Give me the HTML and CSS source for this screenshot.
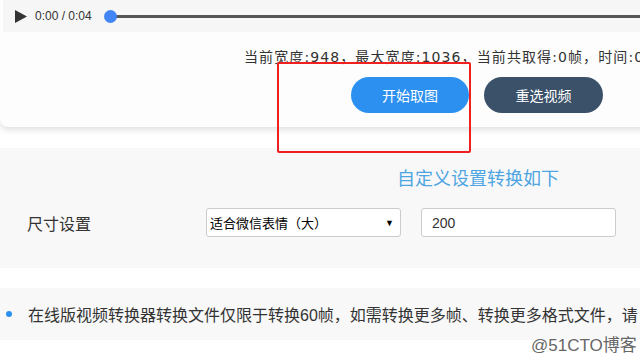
FILE: index.html
```html
<!DOCTYPE html>
<html lang="zh-CN">
<head>
    <meta charset="UTF-8">
    <meta name="viewport" content="width=device-width, initial-scale=1.0">
    <title>视频转GIF</title>
    <link rel="stylesheet" href="styles.css">
</head>
<body>
    <div class="page">
        <!-- Player card -->
        <div class="card">
            <div class="player">
                <svg class="play" width="12" height="13" viewBox="0 0 12 13"><path d="M0 0 L12 6.5 L0 13 Z" fill="#333"/></svg>
                <span class="time">0:00 / 0:04</span>
                <div class="track"><span class="knob"></span></div>
            </div>
            <div class="status">当前宽度:948，最大宽度:1036，当前共取得:0帧，时间:0</div>
            <div class="actions">
                <button class="btn btn-primary">开始取图</button>
                <button class="btn btn-dark">重选视频</button>
            </div>
        </div>

        <!-- Settings -->
        <div class="settings">
            <h2 class="settings-title">自定义设置转换如下</h2>
            <div class="setting-row">
                <label class="setting-label">尺寸设置</label>
                <div class="select">适合微信表情（大）<span class="caret">▼</span></div>
                <div class="text-input">200</div>
            </div>
        </div>

        <!-- Notice -->
        <div class="notice">
            <span class="dot"></span>
            <p>在线版视频转换器转换文件仅限于转换60帧，如需转换更多帧、转换更多格式文件，请</p>
        </div>
    </div>

    <!-- annotation box -->
    <div class="mark"></div>
    <div class="watermark">@51CTO博客</div>
</body>
</html>
```

FILE: styles.css
```css
/* General styles */
body {
    margin: 0;
    width: 640px;
    height: 359px;
    overflow: hidden;
    background: #ffffff;
    font-family: "Liberation Sans", "Noto Sans CJK SC", sans-serif;
    color: #333;
    position: relative;
}

.page {
    width: 640px;
}

/* Player card */
.card {
    width: 700px;
    height: 127px;
    background: #fdfdfd;
    border-radius: 0 0 8px 8px;
    box-shadow: 0 3px 6px rgba(0, 0, 0, 0.12);
}

.player {
    height: 32px;
    margin-left: 3px;
    background: #f6f6f6;
    display: flex;
    align-items: center;
}

.play {
    margin-left: 12px;
}

.time {
    margin-left: 8px;
    font-size: 12px;
    color: #333;
}

.track {
    flex: 1;
    height: 3px;
    margin-left: 18px;
    background: #555;
    position: relative;
}

.knob {
    position: absolute;
    left: -6px;
    top: -5px;
    width: 13px;
    height: 13px;
    border-radius: 50%;
    background: #4285f4;
}

.status {
    padding-left: 244px;
    margin-top: 16px;
    font-family: "DejaVu Sans", "Noto Sans CJK SC", sans-serif;
    font-size: 14px;
    letter-spacing: 1.1px;
    line-height: 18px;
    white-space: nowrap;
}

.actions {
    display: flex;
    gap: 15px;
    padding-left: 351px;
    margin-top: 11px;
}

.btn {
    width: 118px;
    height: 36px;
    border: none;
    border-radius: 18px;
    color: #fff;
    font-family: inherit;
    font-size: 14px;
}

.btn-primary {
    background: #2b90ef;
}

.btn-dark {
    background: #3a5169;
    width: 119px;
}

/* Settings */
.settings {
    margin-top: 21px;
    height: 120px;
    background: #f8f8f8;
    overflow: hidden;
}

.settings-title {
    margin: 20px 0 0 397px;
    font-size: 18px;
    font-weight: normal;
    line-height: 22px;
    color: #4ea5e2;
}

.setting-row {
    display: flex;
    align-items: center;
    margin-top: 18px;
}

.setting-label {
    width: 206px;
    padding-left: 27px;
    box-sizing: border-box;
    font-size: 16px;
}

.select,
.text-input {
    height: 29px;
    box-sizing: border-box;
    background: #fff;
    border: 1px solid #ccc;
    border-radius: 3px;
    font-size: 13px;
    display: flex;
    align-items: center;
}

.select {
    width: 195px;
    padding: 0 6px 0 3px;
    justify-content: space-between;
    color: #000;
}

.caret {
    font-size: 9px;
}

.text-input {
    width: 195px;
    margin-left: 20px;
    padding-left: 10px;
    font-size: 14px;
}

/* Notice */
.notice {
    margin-top: 20px;
    height: 52px;
    background: #f8f8f8;
    display: flex;
    align-items: center;
    white-space: nowrap;
}

.dot {
    flex-shrink: 0;
    width: 6px;
    height: 6px;
    margin-left: 6px;
    border-radius: 50%;
    background: #2b90ef;
}

.notice p {
    margin: 0 0 0 16px;
    font-size: 16px;
}

/* Overlay annotation */
.mark {
    position: absolute;
    left: 277px;
    top: 62px;
    width: 190px;
    height: 87px;
    border: 2px solid #f02020;
    border-radius: 2px;
}

.watermark {
    position: absolute;
    left: 531px;
    top: 331px;
    font-size: 17px;
    white-space: nowrap;
    color: #666;
    text-shadow: 0 0 2px #fff, 0 0 2px #fff;
}
```
